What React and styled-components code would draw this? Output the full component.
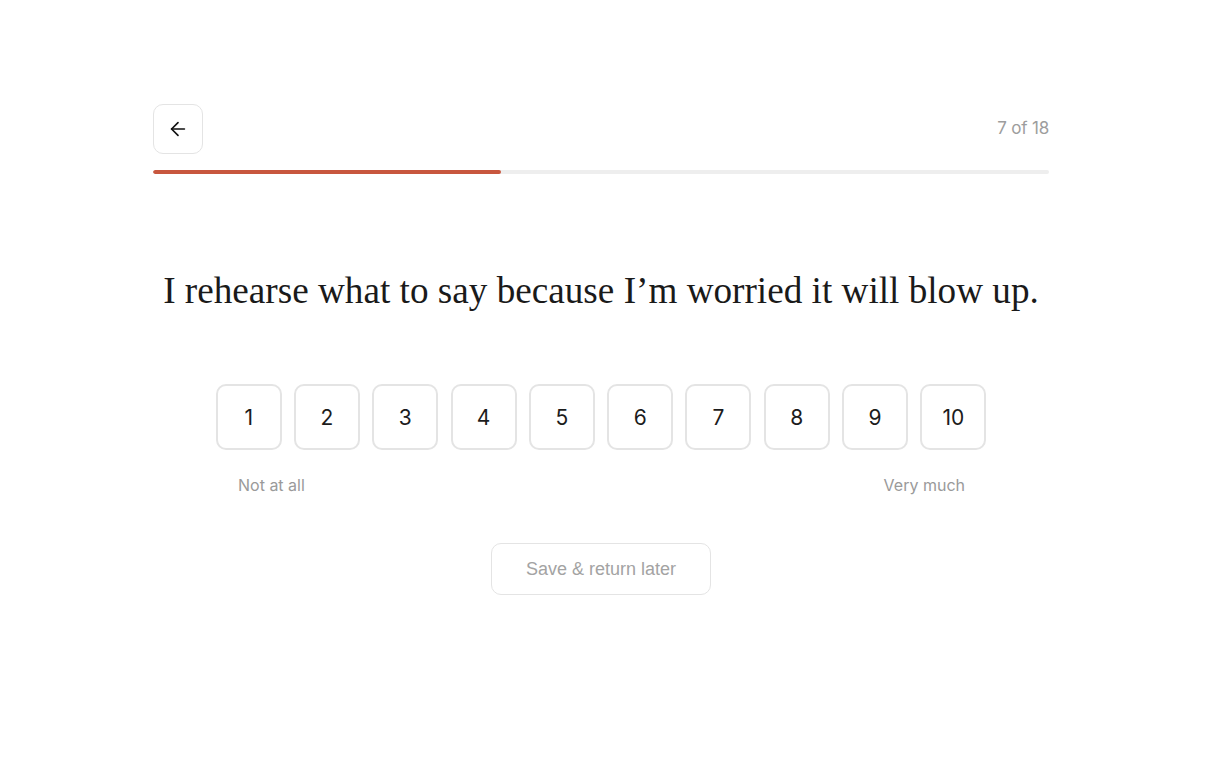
import React from "react";
import styled, { createGlobalStyle } from "styled-components";
import { ArrowLeft } from "lucide-react";

const GlobalStyle = createGlobalStyle`
  html, body {
    margin: 0;
    padding: 0;
    background: #fff;
  }
  body {
    font-family: Inter, "Liberation Sans", Arial, sans-serif;
    color: #1a1a1a;
  }
`;

const QUESTION = "I rehearse what to say because I\u2019m worried it will blow up.";
const CURRENT = 7;
const TOTAL = 18;

function App() {
  const scale = Array.from({ length: 10 }, (_, i) => i + 1);
  return (
    <Page>
      <GlobalStyle />
      <Container>
        <Header>
          <BackButton aria-label="Back">
            <ArrowLeft size={22} strokeWidth={1.8} />
          </BackButton>
          <Counter>
            {CURRENT} of {TOTAL}
          </Counter>
        </Header>
        <Track>
          <Fill style={{ width: `${(CURRENT / TOTAL) * 100}%` }} />
        </Track>

        <Question>{QUESTION}</Question>

        <Scale>
          <Options>
            {scale.map((n) => (
              <Option key={n}>{n}</Option>
            ))}
          </Options>
          <Labels>
            <span>Not at all</span>
            <span>Very much</span>
          </Labels>
        </Scale>

        <Footer>
          <SaveButton>Save &amp; return later</SaveButton>
        </Footer>
      </Container>
    </Page>
  );
}

export default App;

const Page = styled.div`
  padding: 104px 14px 0 0;
  min-height: 780px;
  box-sizing: border-box;
`;

const Container = styled.div`
  width: 896px;
  margin: 0 auto;
`;

const Header = styled.div`
  display: flex;
  align-items: center;
  justify-content: space-between;
`;

const BackButton = styled.button`
  width: 50px;
  height: 50px;
  display: flex;
  align-items: center;
  justify-content: center;
  background: #fff;
  border: 1.5px solid #e4e4e4;
  border-radius: 10px;
  color: #111;
  padding: 0;
  cursor: pointer;
`;

const Counter = styled.span`
  font-size: 17px;
  color: #9d9d9d;
  letter-spacing: -0.2px;
  margin-bottom: 2px;
`;

const Track = styled.div`
  margin-top: 16px;
  height: 4px;
  border-radius: 2px;
  background: #eeeeee;
  overflow: hidden;
`;

const Fill = styled.div`
  height: 100%;
  border-radius: 2px;
  background: #c8573e;
`;

const Question = styled.h1`
  margin: 92px 0 0;
  text-align: center;
  font-family: "Liberation Serif", "Times New Roman", serif;
  font-weight: 400;
  font-size: 37.2px;
  line-height: 50px;
  color: #1a1a1a;
`;

const Scale = styled.div`
  margin-top: 68px;
  display: flex;
  flex-direction: column;
  align-items: center;
`;

const Options = styled.div`
  display: flex;
  gap: 12.3px;
`;

const Option = styled.button`
  width: 66px;
  height: 66px;
  box-sizing: border-box;
  background: #fff;
  border: 2px solid #e4e4e4;
  border-radius: 10px;
  font-family: Inter, "Liberation Sans", Arial, sans-serif;
  font-size: 21px;
  color: #1c1c1c;
  padding: 0;
  cursor: pointer;
`;

const Labels = styled.div`
  align-self: stretch;
  display: flex;
  justify-content: space-between;
  margin: 25px 84px 0 85px;
  font-size: 16px;
  color: #9a9a9a;
`;

const Footer = styled.div`
  margin-top: 48px;
  display: flex;
  justify-content: center;
`;

const SaveButton = styled.button`
  width: 220px;
  height: 52px;
  background: #fff;
  border: 1.5px solid #e4e4e4;
  border-radius: 10px;
  font-family: "Liberation Sans", Arial, sans-serif;
  font-size: 18px;
  color: #a3a3a3;
  cursor: pointer;
`;
